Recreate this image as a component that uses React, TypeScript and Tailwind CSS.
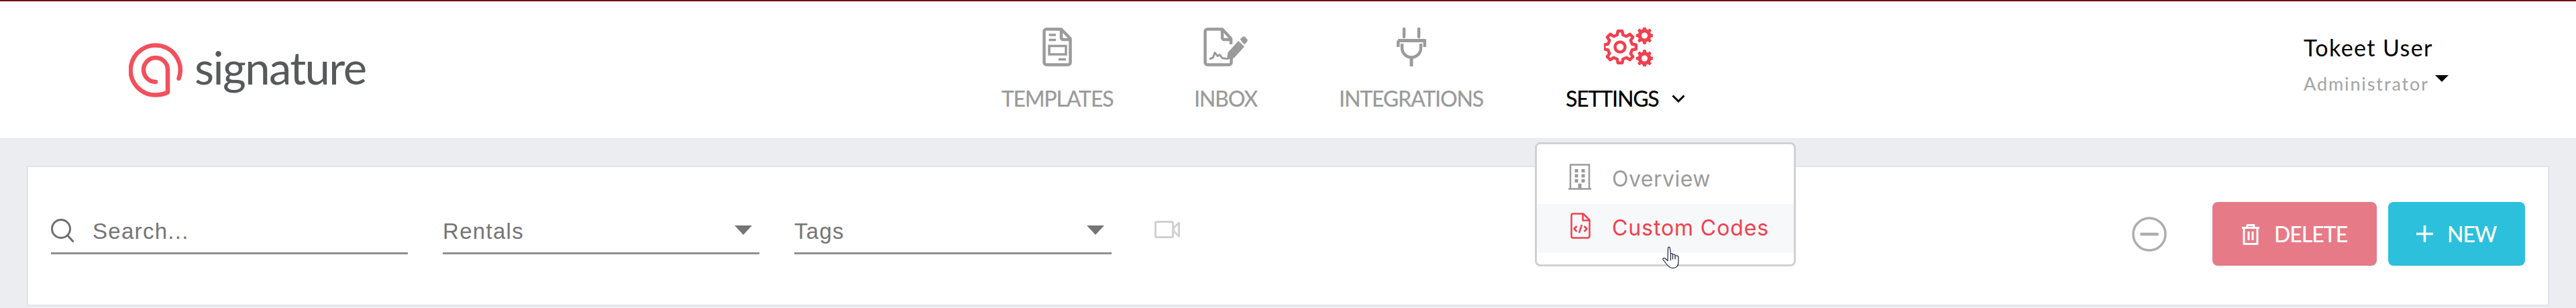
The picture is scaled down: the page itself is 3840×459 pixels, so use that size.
const GREY = "#9b9b9b";
const RED = "#f0404f";

// outline of a cog, used by the settings icon
function gearPath(cx: number, cy: number, rOut: number, rIn: number, teeth: number) {
  const pts: string[] = [];
  const step = (Math.PI * 2) / teeth;
  for (let i = 0; i < teeth; i++) {
    const a = i * step - Math.PI / 2;
    const corners: [number, number][] = [
      [rIn, a - step * 0.3],
      [rOut, a - step * 0.17],
      [rOut, a + step * 0.17],
      [rIn, a + step * 0.3],
    ];
    corners.forEach(([r, t]) => {
      pts.push(`${(cx + r * Math.cos(t)).toFixed(2)} ${(cy + r * Math.sin(t)).toFixed(2)}`);
    });
  }
  return "M" + pts.join("L") + "Z";
}

function TemplatesIcon() {
  return (
    <svg width="44" height="58" viewBox="0 0 44 58" fill="none" stroke={GREY} strokeWidth="4.5">
      <path d="M6 2.5H28L41.5 16.5V52a3.5 3.5 0 0 1-3.5 3.5H6A3.5 3.5 0 0 1 2.5 52V6A3.5 3.5 0 0 1 6 2.5Z" strokeLinejoin="round" />
      <path d="M28 3V15a3 3 0 0 0 3 3H41" />
      <path d="M9.5 11H20M9.5 18.5H20M24 47.5H35" strokeWidth="3.5" />
      <rect x="10" y="27.5" width="25" height="12.5" strokeWidth="3.5" />
    </svg>
  );
}

function InboxIcon() {
  return (
    <svg width="66" height="58" viewBox="0 0 66 58" fill="none" stroke={GREY} strokeWidth="4.5">
      <path d="M41 25V16.5L28 2.5H6A3.5 3.5 0 0 0 2.5 6V52A3.5 3.5 0 0 0 6 55.5H38a3.5 3.5 0 0 0 3.5-3.5V45" strokeLinejoin="round" />
      <path d="M28 3V15a3 3 0 0 0 3 3H41" />
      <path d="M10 46.5 14 45 17 37.5 21 42.5 24 40.5 28 45.5 34 46.5" strokeWidth="3" strokeLinejoin="round" strokeLinecap="round" />
      <path d="M34.5 48 36.5 37 52 20 61 28.5 45.5 45.5Z" fill={GREY} stroke="none" />
      <path d="M54.5 17.5 59 13.5Q60.5 13 62 14L65.5 18Q66 20 65 21L61 25.5Z" fill={GREY} stroke="none" />
    </svg>
  );
}

function PlugIcon() {
  return (
    <svg width="44" height="58" viewBox="0 0 44 58" fill="none" stroke={GREY}>
      <path d="M11 2V14M33 2V14" strokeWidth="4.5" strokeLinecap="round" />
      <path d="M2 19.5H42V29M2 19.5V29" strokeWidth="5" strokeLinejoin="round" />
      <path d="M8 24V30.5a14 14 0 0 0 28 0V24" strokeWidth="4.5" />
      <path d="M22 45V58" strokeWidth="5" />
    </svg>
  );
}

function SettingsIcon() {
  return (
    <svg width="73" height="58" viewBox="0 0 73 58" fill="none">
      <path d={gearPath(24, 29, 24, 18.5, 8)} stroke={RED} strokeWidth="4.5" strokeLinejoin="round" />
      <circle cx="24" cy="29" r="7.5" stroke={RED} strokeWidth="4.5" />
      <path d={gearPath(60.5, 12, 12.5, 9.5, 8)} fill={RED} stroke={RED} strokeLinejoin="round" />
      <circle cx="60.5" cy="12" r="4.5" fill="white" />
      <path d={gearPath(60.5, 46, 12.5, 9.5, 8)} fill={RED} stroke={RED} strokeLinejoin="round" />
      <circle cx="60.5" cy="46" r="4.5" fill="white" />
    </svg>
  );
}

function BuildingIcon() {
  return (
    <svg width="34" height="39" viewBox="0 0 34 39" fill="none" stroke={GREY}>
      <path d="M3 38V1.5H31V38" strokeWidth="2.5" />
      <path d="M0 37.5H34" strokeWidth="2.5" />
      <path d="M15 37V30H19V37Z" fill={GREY} strokeWidth="1" />
      <g fill={GREY} stroke="none">
        <rect x="9.5" y="8" width="5" height="5" />
        <rect x="19.5" y="8" width="5" height="5" />
        <rect x="9.5" y="15.5" width="5" height="5" />
        <rect x="19.5" y="15.5" width="5" height="5" />
        <rect x="9.5" y="23" width="5" height="5" />
        <rect x="19.5" y="23" width="5" height="5" />
      </g>
    </svg>
  );
}

function CodeFileIcon() {
  return (
    <svg width="30" height="39" viewBox="0 0 30 39" fill="none" stroke={RED} strokeWidth="2.5" strokeLinejoin="round">
      <path d="M3.5 1.5H19L28.5 11V35a2.5 2.5 0 0 1-2.5 2.5H3.5A2.5 2.5 0 0 1 1.5 35V4A2.5 2.5 0 0 1 3.5 1.5Z" />
      <path d="M18.5 2V11.5H28" />
      <path d="M9.5 20 5.5 24 9.5 28M20.5 20 24.5 24 20.5 28M17 18 13 30" strokeWidth="2.5" />
    </svg>
  );
}

function HandCursor() {
  return (
    <svg width="26" height="33" viewBox="0 0 26 33" fill="white" stroke="#1c2340" strokeWidth="1.2" strokeLinejoin="round">
      <path d="M8.5 3C8.5.5 11 .5 11.5 3L12.5 12V21 11.5C14 10 15.5 11 15.5 12.5V19 12.5C17 11.5 19 12 19 14V19 14.5C21 13.5 24 14 24 16.5V24C24 29 21 32.5 15 32.5 11 32.5 8 29 5 25L1 20C.5 18 2.5 17 4 18L8 21.5Z" />
    </svg>
  );
}

function Field({ label, width, arrow }: { label: string; width: string; arrow?: boolean }) {
  return (
    <div className={`flex h-[63px] items-start justify-between border-b-[3px] border-[#8f8f8f] ${width}`}>
      <span className="pt-[11px] text-[33px] leading-[36px] tracking-[1.3px] text-[#757575]">{label}</span>
      {arrow && (
        <span className="mr-[11px] mt-[20px] h-0 w-0 border-x-[13px] border-t-[14px] border-x-transparent border-t-[#757575]" />
      )}
    </div>
  );
}

function NavItem({ label, width, icon }: { label: string; width: string; icon: React.ReactNode }) {
  return (
    <div className={`flex flex-col items-center ${width}`}>
      <div className="flex h-[58px] items-center">{icon}</div>
      <span className="mt-[30px] text-[32px] font-medium leading-[36px] tracking-[-1.2px] text-[#9b9b9b]">{label}</span>
    </div>
  );
}

export default function App() {
  return (
    <div className="h-[459px] w-[3840px] overflow-hidden bg-[#ebedf1] font-['Liberation_Sans',sans-serif]">
      <header className="flex h-[207px] border-t-[2px] border-b-[1px] border-t-[#7a0f14] border-b-[#e4e6ea] bg-white font-['Lato',sans-serif]">
        <div className="flex w-[1493px] items-start pl-[192px] pt-[62px]">
          <svg width="80" height="81" viewBox="0 0 80 81" fill="none" stroke="#f2505c" strokeWidth="6.5" strokeLinecap="round" strokeLinejoin="round">
            <path d="M74.5 53A37 37 0 1 0 40 77.5Q50 77.5 58 73.5V40A18 18 0 0 0 22 40A18 18 0 0 0 40 58" />
          </svg>
          <span className="ml-[18px] mt-[-4px] text-[67px] leading-[80px] tracking-[-1.6px] text-[#58595b]">signature</span>
        </div>

        <nav className="flex items-start gap-[122px] pt-[39px]">
          <NavItem label="TEMPLATES" width="w-[166px]" icon={<TemplatesIcon />} />
          <NavItem label="INBOX" width="w-[92px]" icon={<InboxIcon />} />
          <NavItem label="INTEGRATIONS" width="w-[217px]" icon={<PlugIcon />} />
          <div className="relative flex w-[178px] flex-col items-center">
            <div className="ml-[8px] flex h-[58px] items-center">
              <SettingsIcon />
            </div>
            <div className="mt-[30px] flex w-full items-center justify-between">
              <span className="text-[32px] font-medium leading-[36px] tracking-[-1.2px] text-black">SETTINGS</span>
              <svg width="20" height="12" viewBox="0 0 20 12" fill="none" stroke="black" strokeWidth="3">
                <path d="M1.5 1.5 10 10 18.5 1.5" />
              </svg>
            </div>

            <div className="absolute left-[-46px] top-[171px] z-10 h-[185px] w-[389px] rounded-[8px] border-[3px] border-[#cfd1d4] bg-white font-['Inter',sans-serif]">
              <div className="flex h-[89px] items-start pl-[47px] pt-[29px]">
                <BuildingIcon />
                <span className="ml-[31px] mt-[3px] text-[32px] leading-[40px] tracking-[0.5px] text-[#9b9b9b]">Overview</span>
              </div>
              <div className="flex h-[73px] items-start bg-[#f7f8fa] pl-[50px] pt-[13px]">
                <CodeFileIcon />
                <span className="ml-[32px] mt-[3px] text-[32px] leading-[40px] tracking-[0.9px] text-[#f0404f]">Custom Codes</span>
              </div>
              <div className="absolute left-[187px] top-[152px]">
                <HandCursor />
              </div>
            </div>
          </div>
        </nav>

        <div className="ml-auto flex w-[406px] flex-col pt-[49px]">
          <span className="text-[34px] leading-[40px] tracking-[1.4px] text-black">Tokeet User</span>
          <div className="mt-[18px] flex items-start">
            <span className="text-[27px] leading-[32px] tracking-[1.9px] text-[#a3a3a3]">Administrator</span>
            <span className="ml-[9px] mt-[3px] h-0 w-0 border-x-[10px] border-t-[10px] border-x-transparent border-t-black" />
          </div>
        </div>
      </header>

      <main className="px-[40px] pt-[40px]">
        <section className="flex h-[209px] items-start rounded-[2px] border-[2px] border-[#e1e3e8] bg-white pl-[34px] pr-[34px] pt-[52px]">
          <div className="flex items-start gap-[52px] pt-[15px]">
            <div className="flex h-[63px] w-[532px] items-start border-b-[3px] border-[#8f8f8f]">
              <svg width="34" height="35" viewBox="0 0 34 35" fill="none" stroke="#6f6f6f" strokeWidth="3" className="mt-[10px]">
                <ellipse cx="15" cy="15" rx="13.5" ry="13.5" />
                <path d="M24.5 24.5 33 34" strokeLinecap="round" />
              </svg>
              <span className="ml-[28px] pt-[11px] text-[33px] leading-[36px] tracking-[1.3px] text-[#757575]">Search...</span>
            </div>
            <Field label="Rentals" width="w-[472px]" arrow />
            <Field label="Tags" width="w-[473px]" arrow />
          </div>

          <svg width="38" height="26" viewBox="0 0 38 26" fill="none" stroke="#d0d0d0" strokeWidth="3" strokeLinejoin="round" className="ml-[64px] mt-[28px]">
            <rect x="1.5" y="1.5" width="26" height="23" rx="2" />
            <path d="M36.5 3V23L28 15V11Z" />
          </svg>

          <div className="ml-auto flex items-start">
            <svg width="52" height="52" viewBox="0 0 52 52" fill="none" stroke="#adadad" className="mr-[68px] mt-[22px]">
              <circle cx="26" cy="26" r="24" strokeWidth="3.5" />
              <path d="M12.5 26H39.5" strokeWidth="4.5" />
            </svg>
            <button className="mr-[17px] flex h-[95px] w-[245px] items-center rounded-[8px] bg-[#e77a87] pl-[43px] text-[32px] text-white">
              <svg width="28" height="32" viewBox="0 0 28 32" fill="none" stroke="white" strokeWidth="3" strokeLinejoin="round">
                <path d="M1 6.5H27M9 6V2.5H19V6M4 7V30.5H24V7M11 12V25M17 12V25" />
              </svg>
              <span className="ml-[21px] font-['Lato',sans-serif] font-medium tracking-[-1px]">DELETE</span>
            </button>
            <button className="flex h-[95px] w-[204px] items-center rounded-[8px] bg-[#2cc0dc] pl-[42px] text-[32px] text-white">
              <svg width="25" height="25" viewBox="0 0 25 25" fill="none" stroke="white" strokeWidth="3.5">
                <path d="M12.5 0V25M0 12.5H25" />
              </svg>
              <span className="ml-[21px] font-['Lato',sans-serif] font-medium tracking-[-1px]">NEW</span>
            </button>
          </div>
        </section>
      </main>
    </div>
  );
}
